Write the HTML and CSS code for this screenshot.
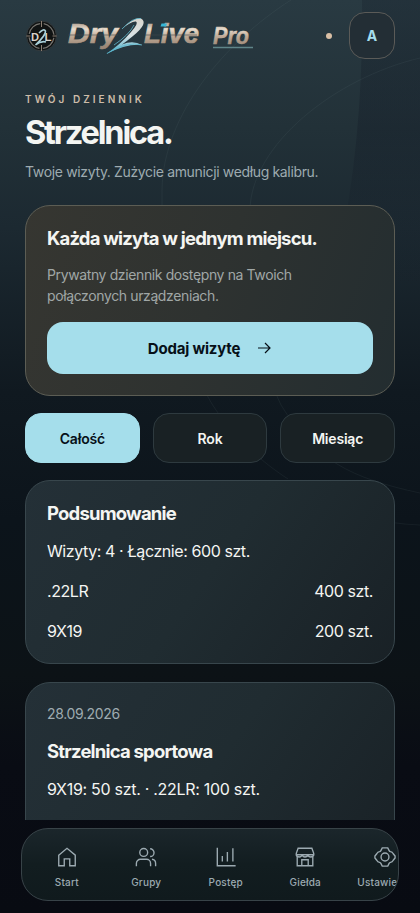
FILE: index.html
```html
<!DOCTYPE html>
<html lang="pl">
<head>
<meta charset="utf-8">
<meta name="viewport" content="width=device-width, initial-scale=1">
<title>Strzelnica</title>
<link rel="stylesheet" href="styles.css">
</head>
<body>
<svg class="backdrop" viewBox="0 0 420 913" fill="none" aria-hidden="true">
  <defs>
    <linearGradient id="shade" x1="0" y1="0" x2="0" y2="1">
      <stop offset="0" stop-color="#111824" stop-opacity=".24"/><stop offset=".45" stop-color="#111824" stop-opacity=".3"/><stop offset="1" stop-color="#111824" stop-opacity="0"/>
    </linearGradient>
  </defs>
  <path class="backdrop-shade" d="M362 0H420V290H330Q364 160 362 0Z"/>
  <path d="M291 0C225 42 163 115 162 190C161 280 180 350 212 404C235 440 265 464 288 479"/>
  <path d="M420 58C335 78 251 145 250 210C249 290 257 355 281 405C315 460 350 478 420 493"/>
  <path d="M360 516Q390 524 420 525"/>
</svg>
<div class="app">
  <header class="topbar">
    <svg class="brand" viewBox="0 0 230 44" role="img" aria-label="Dry2Live Pro">
      <defs>
        <linearGradient id="metal" gradientUnits="userSpaceOnUse" x1="0" y1="8" x2="0" y2="32">
          <stop offset="0" stop-color="#a8988a"/><stop offset=".3" stop-color="#e9dccd"/>
          <stop offset=".6" stop-color="#c0ab98"/><stop offset="1" stop-color="#9c8877"/>
        </linearGradient>
        <linearGradient id="ice" x1="0" y1="0" x2="0" y2="1">
          <stop offset="0" stop-color="#d9d6ce"/><stop offset=".5" stop-color="#d8e2e4"/><stop offset="1" stop-color="#35a6c4"/>
        </linearGradient>
      </defs>
      <circle cx="16.500" cy="22" r="15" fill="#101313" stroke="#343b3e"/>
      <circle cx="16.500" cy="22" r="12.500" fill="none" stroke="#77746f" stroke-width="1.200" stroke-dasharray="16 3.600" stroke-dashoffset="-2"/>
      <path d="M16.500 7v6m0 18v6M1.500 22h4m22 0h4" stroke="#8b7f73"/>
      <text class="seal" x="6" y="26.500" textLength="8" lengthAdjust="spacingAndGlyphs">D</text>
      <text class="seal" x="19.500" y="26.500" textLength="7" lengthAdjust="spacingAndGlyphs">L</text>
      <path d="M14 19Q19 14 20.500 17Q21 21 10.500 31Q16 26.500 21 28" fill="none" stroke="#a8cfd8" stroke-width="1.600"/>
      <text class="word" x="43" y="28.500" textLength="50" lengthAdjust="spacingAndGlyphs">Dry</text>
      <text class="word" x="119" y="28.500" textLength="55" lengthAdjust="spacingAndGlyphs">Live</text>
      <path d="M43 21H93M120 21H172" stroke="#40464a" stroke-width=".6"/>
      <path d="M97 15Q109 3 116 4.500Q124 9 108 22Q102 27 97 30.500Q108 26 117 31Q103 29 81 40Q96 30 106 18Q114 9 111 7.500Q106 7 97 15Z" fill="url(#ice)"/>
      <path d="M97 15Q108 3 116 4.500M109 11Q104 21 89 31M82 39.500Q102 27 117 31" fill="none" stroke="#63b9cd" stroke-width=".8"/>
      <path d="M136.500 9.500h5.500l-1 3h-5.500z" fill="#36b6d6"/>
      <text class="pro" x="188" y="30" textLength="36" lengthAdjust="spacingAndGlyphs">Pro</text>
      <path d="M188 33.500H228" stroke="#5f8589" stroke-width="1.500"/>
    </svg>
    <span class="status"></span>
    <button class="avatar">A</button>
  </header>
  <main class="content">
    <p class="eyebrow">TWÓJ DZIENNIK</p>
    <h1>Strzelnica.</h1>
    <p class="lead">Twoje wizyty. Zużycie amunicji według kalibru.</p>
    <section class="card hero">
      <h2 class="hero-title">Każda wizyta w jednym miejscu.</h2>
      <p class="hero-copy">Prywatny dziennik dostępny na Twoich połączonych urządzeniach.</p>
      <button class="add"><span>Dodaj wizytę</span>
        <svg width="16" height="16" viewBox="0 0 16 16"><path d="M2 8h12M9 3l5 5-5 5"/></svg>
      </button>
    </section>
    <div class="tabs">
      <button class="tab active">Całość</button>
      <button class="tab">Rok</button>
      <button class="tab">Miesiąc</button>
    </div>
    <section class="card summary">
      <h2>Podsumowanie</h2>
      <p class="line">Wizyty: 4 · Łącznie: 600 szt.</p>
      <p class="line"><span>.22LR</span><span>400 szt.</span></p>
      <p class="line"><span>9X19</span><span>200 szt.</span></p>
    </section>
    <section class="card visit">
      <p class="date">28.09.2026</p>
      <h2 class="visit-title">Strzelnica sportowa</h2>
      <p class="line">9X19: 50 szt. · .22LR: 100 szt.</p>
    </section>
  </main>
  <nav class="dock">
    <a class="item"><svg viewBox="0 0 24 24"><path d="M3 10 12 2.500 21 10v11.500h-6V14H9v7.500H3z"/></svg><span>Start</span></a>
    <a class="item"><svg viewBox="0 0 24 24"><circle cx="9.500" cy="7" r="4.300"/><path d="M1.500 22v-3a4.500 4.500 0 0 1 4.500-4.500h6.500A4.500 4.500 0 0 1 17 19v3M16.500 3a4.200 4.200 0 0 1 0 8.500M18.500 14.500a4.500 4.500 0 0 1 4 4.500v3"/></svg><span>Grupy</span></a>
    <a class="item"><svg viewBox="0 0 24 24"><path d="M2.500 2v19.500h20M8 17v-6M13.500 17V6.500M19.500 17V2.500"/></svg><span>Postęp</span></a>
    <a class="item"><svg viewBox="0 0 24 24"><path d="M4.500 2.500h15L21.500 8v1.500h-19V8zM3.500 11v10.500h17V11M8.500 21.500V15h7v6.500"/><path d="M2.500 9.500q.5 2.500 3.200 2.500T9 9.500q.5 2.500 3 2.500t3-2.500q.7 2.500 3.300 2.500t3.200-2.500"/></svg><span>Giełda</span></a>
    <a class="item"><svg viewBox="0 0 24 24"><circle cx="12" cy="12" r="4.300"/><path d="M9 2h6l1.500 3q.5 1 1.500 1.200 2 .3 3 2.300l2 2.500v2L21 15.500q-1 2-3 2.300-1 .2-1.500 1.200L15 22H9l-1.500-3q-.5-1-1.500-1.200-2-.3-3-2.300L1 13v-2L3 8.500q1-2 3-2.300Q7 6 7.500 5z"/></svg><span>Ustawienia</span></a>
  </nav>
</div>
</body>
</html>
```
FILE: styles.css
```css
* { box-sizing: border-box; }
body {
  margin: 0;
  height: 913px;
  overflow: hidden;
  font-family: Inter, "Liberation Sans", sans-serif;
  color: #f4f5f2;
  background: linear-gradient(180deg, #293a42 0, #223138 14%, #1c2931 25%, #101920 43%, #0c141b 57%, #0c1216 74%, #090c14 84%, #080b12 100%);
}
h1, h2, p { margin: 0; }
button { font: inherit; padding: 0; border: 0; }
.backdrop { position: absolute; inset: 0; width: 420px; height: 913px; stroke: #8ca2a8; stroke-opacity: .08; stroke-width: 1; }
.backdrop-shade { fill: url(#shade); stroke: none; }
.app { position: relative; height: 913px; display: flex; flex-direction: column; }
.topbar { height: 71px; padding: 0 25px; display: flex; align-items: center; flex-shrink: 0; }
.brand { width: 230px; height: 44px; }
.word, .pro, .seal { font-family: "Liberation Sans", sans-serif; font-weight: 700; font-style: italic; fill: url(#metal); }
.word { font-size: 27px; stroke: url(#metal); stroke-width: .6; }
.pro { font-size: 24px; stroke: url(#metal); stroke-width: .5; }
.seal { font-size: 10.5px; font-style: normal; fill: #d8d2ca; }
.status { width: 6px; height: 6px; border-radius: 50%; background: #d9bfa5; margin-left: auto; margin-right: 17px; }
.avatar { width: 46px; height: 47px; border: 1px solid #5b5b58; border-radius: 16px; background: #232e35; color: #a5deed; font-size: 14px; font-weight: 700; }
.content { height: 749px; padding: 0 25px; overflow: hidden; flex-shrink: 0; }
.eyebrow { margin-top: 22px; height: 12px; font-size: 10px; line-height: 12px; font-weight: 600; letter-spacing: 3.05px; color: #cdbca9; }
h1 { margin-top: 8px; font-size: 32.5px; line-height: 40px; font-weight: 700; letter-spacing: -2.2px; }
.lead { margin-top: 8px; font-size: 14px; line-height: 21px; letter-spacing: -.35px; color: #9eabb0; }
.card { border: 1px solid #38464c; border-radius: 25px; padding: 0 21px; background: linear-gradient(125deg, #243037 0, #202c31 50%, #192126 100%); }
.hero { height: 191px; margin-top: 23px; border-color: #5c5d54; background: linear-gradient(110deg, #363631 0, #2e3230 50%, #232d30 100%); }
h2 { font-size: 18.5px; line-height: 24px; font-weight: 700; letter-spacing: -.81px; }
.hero-title { margin-top: 20px; }
.hero-copy { margin-top: 14px; font-size: 14px; line-height: 21px; letter-spacing: -.38px; color: #a0a7a6; }
.add { margin-top: 16px; width: 100%; height: 52px; border-radius: 16px; background: #a5deeb; color: #071018; display: flex; align-items: center; justify-content: center; gap: 16px; font-size: 15px; font-weight: 700; letter-spacing: -.2px; }
.add svg { fill: none; stroke: currentColor; stroke-width: 1.2; }
.tabs { margin: 17px 0; display: grid; grid-template-columns: repeat(3, 1fr); gap: 13px; }
.tab { height: 50px; border: 1px solid #2e3a3f; border-radius: 16px; background: #192124; color: #f4f5f2; font-size: 14px; font-weight: 600; letter-spacing: -.2px; }
.tab.active { background: #a5deeb; border-color: #a5deeb; color: #071018; }
.summary { height: 184px; padding-top: 20px; }
.line { height: 24px; margin-top: 16px; font-size: 16px; line-height: 24px; letter-spacing: -.42px; display: flex; justify-content: space-between; }
.summary h2 + .line { margin-top: 14px; }
.visit { height: 184px; margin-top: 18px; padding-top: 20px; }
.date { font-size: 14px; line-height: 21px; letter-spacing: -.36px; color: #9eabb0; }
.visit-title { margin-top: 15px; }
.visit .line { margin-top: 14px; letter-spacing: -.29px; }
.dock { height: 73px; width: 378px; margin: 8px 0 0 21px; border: 1px solid #384348; border-radius: 27px; overflow: hidden; display: flex; padding: 0 5px; background: linear-gradient(180deg, #1b262b 0, #121d20 50%, #101a1d 100%); }
.item { flex: 0 0 79.5px; display: flex; flex-direction: column; align-items: center; padding-top: 17px; color: #9caab1; }
.item svg { width: 22px; height: 22px; fill: none; stroke: currentColor; stroke-width: 1.5; }
.item span { margin-top: 7px; font-size: 10px; line-height: 14px; font-weight: 500; letter-spacing: .2px; }
```
